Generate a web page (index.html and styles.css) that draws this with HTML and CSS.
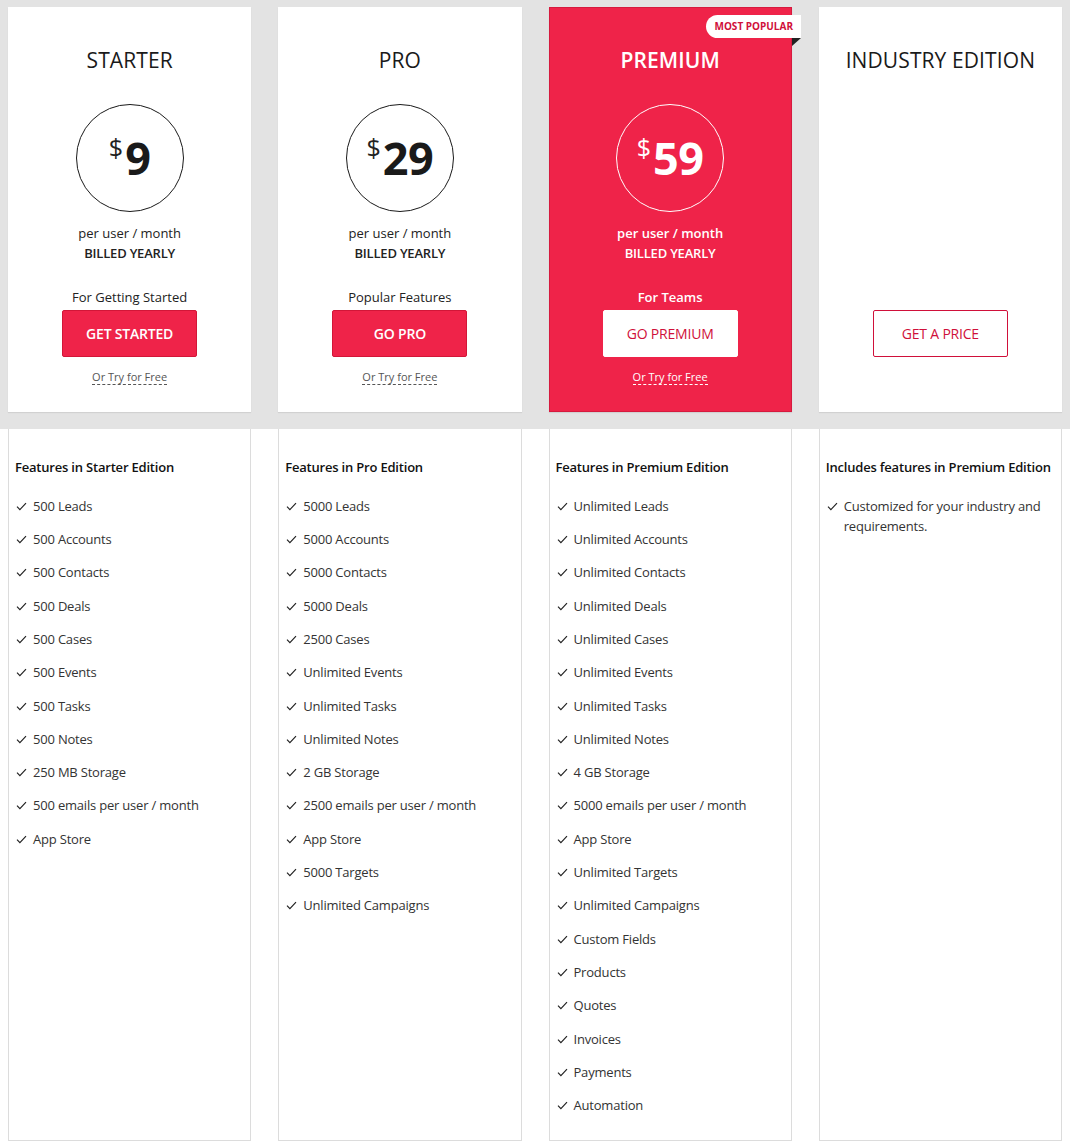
FILE: index.html
```html
<!DOCTYPE html>
<html lang="en">
<head>
<meta charset="utf-8">
<title>Pricing</title>
<link rel="stylesheet" href="styles.css">
</head>
<body>
<section class="plans">
  <div class="card">
    <h2 class="title">STARTER</h2>
    <div class="price-area">
      <div class="circle"><span class="cur">$</span><span class="amt">9</span></div>
      <div class="per">per user / month</div>
      <div class="billed">BILLED YEARLY</div>
    </div>
    <div class="tagline">For Getting Started</div>
    <a class="btn btn-red">GET STARTED</a>
    <a class="try">Or Try for Free</a>
  </div>
  <div class="card">
    <h2 class="title">PRO</h2>
    <div class="price-area">
      <div class="circle"><span class="cur">$</span><span class="amt">29</span></div>
      <div class="per">per user / month</div>
      <div class="billed">BILLED YEARLY</div>
    </div>
    <div class="tagline">Popular Features</div>
    <a class="btn btn-red">GO PRO</a>
    <a class="try">Or Try for Free</a>
  </div>
  <div class="card card-premium">
    <div class="badge">MOST POPULAR</div>
    <h2 class="title">PREMIUM</h2>
    <div class="price-area">
      <div class="circle"><span class="cur">$</span><span class="amt">59</span></div>
      <div class="per">per user / month</div>
      <div class="billed">BILLED YEARLY</div>
    </div>
    <div class="tagline">For Teams</div>
    <a class="btn btn-white">GO PREMIUM</a>
    <a class="try">Or Try for Free</a>
  </div>
  <div class="card">
    <h2 class="title">INDUSTRY EDITION</h2>
    <div class="price-area"></div>
    <div class="tagline"></div>
    <a class="btn btn-outline">GET A PRICE</a>
  </div>
</section>

<section class="features">
  <div class="col">
    <h3>Features in Starter Edition</h3>
    <ul>
      <li><svg class="chk" viewBox="0 0 12 10"><path d="M1 5.2 L4.2 8.4 L11 1.2"/></svg><span>500 Leads</span></li>
      <li><svg class="chk" viewBox="0 0 12 10"><path d="M1 5.2 L4.2 8.4 L11 1.2"/></svg><span>500 Accounts</span></li>
      <li><svg class="chk" viewBox="0 0 12 10"><path d="M1 5.2 L4.2 8.4 L11 1.2"/></svg><span>500 Contacts</span></li>
      <li><svg class="chk" viewBox="0 0 12 10"><path d="M1 5.2 L4.2 8.4 L11 1.2"/></svg><span>500 Deals</span></li>
      <li><svg class="chk" viewBox="0 0 12 10"><path d="M1 5.2 L4.2 8.4 L11 1.2"/></svg><span>500 Cases</span></li>
      <li><svg class="chk" viewBox="0 0 12 10"><path d="M1 5.2 L4.2 8.4 L11 1.2"/></svg><span>500 Events</span></li>
      <li><svg class="chk" viewBox="0 0 12 10"><path d="M1 5.2 L4.2 8.4 L11 1.2"/></svg><span>500 Tasks</span></li>
      <li><svg class="chk" viewBox="0 0 12 10"><path d="M1 5.2 L4.2 8.4 L11 1.2"/></svg><span>500 Notes</span></li>
      <li><svg class="chk" viewBox="0 0 12 10"><path d="M1 5.2 L4.2 8.4 L11 1.2"/></svg><span>250 MB Storage</span></li>
      <li><svg class="chk" viewBox="0 0 12 10"><path d="M1 5.2 L4.2 8.4 L11 1.2"/></svg><span>500 emails per user / month</span></li>
      <li><svg class="chk" viewBox="0 0 12 10"><path d="M1 5.2 L4.2 8.4 L11 1.2"/></svg><span>App Store</span></li>
    </ul>
  </div>
  <div class="col">
    <h3>Features in Pro Edition</h3>
    <ul>
      <li><svg class="chk" viewBox="0 0 12 10"><path d="M1 5.2 L4.2 8.4 L11 1.2"/></svg><span>5000 Leads</span></li>
      <li><svg class="chk" viewBox="0 0 12 10"><path d="M1 5.2 L4.2 8.4 L11 1.2"/></svg><span>5000 Accounts</span></li>
      <li><svg class="chk" viewBox="0 0 12 10"><path d="M1 5.2 L4.2 8.4 L11 1.2"/></svg><span>5000 Contacts</span></li>
      <li><svg class="chk" viewBox="0 0 12 10"><path d="M1 5.2 L4.2 8.4 L11 1.2"/></svg><span>5000 Deals</span></li>
      <li><svg class="chk" viewBox="0 0 12 10"><path d="M1 5.2 L4.2 8.4 L11 1.2"/></svg><span>2500 Cases</span></li>
      <li><svg class="chk" viewBox="0 0 12 10"><path d="M1 5.2 L4.2 8.4 L11 1.2"/></svg><span>Unlimited Events</span></li>
      <li><svg class="chk" viewBox="0 0 12 10"><path d="M1 5.2 L4.2 8.4 L11 1.2"/></svg><span>Unlimited Tasks</span></li>
      <li><svg class="chk" viewBox="0 0 12 10"><path d="M1 5.2 L4.2 8.4 L11 1.2"/></svg><span>Unlimited Notes</span></li>
      <li><svg class="chk" viewBox="0 0 12 10"><path d="M1 5.2 L4.2 8.4 L11 1.2"/></svg><span>2 GB Storage</span></li>
      <li><svg class="chk" viewBox="0 0 12 10"><path d="M1 5.2 L4.2 8.4 L11 1.2"/></svg><span>2500 emails per user / month</span></li>
      <li><svg class="chk" viewBox="0 0 12 10"><path d="M1 5.2 L4.2 8.4 L11 1.2"/></svg><span>App Store</span></li>
      <li><svg class="chk" viewBox="0 0 12 10"><path d="M1 5.2 L4.2 8.4 L11 1.2"/></svg><span>5000 Targets</span></li>
      <li><svg class="chk" viewBox="0 0 12 10"><path d="M1 5.2 L4.2 8.4 L11 1.2"/></svg><span>Unlimited Campaigns</span></li>
    </ul>
  </div>
  <div class="col">
    <h3>Features in Premium Edition</h3>
    <ul>
      <li><svg class="chk" viewBox="0 0 12 10"><path d="M1 5.2 L4.2 8.4 L11 1.2"/></svg><span>Unlimited Leads</span></li>
      <li><svg class="chk" viewBox="0 0 12 10"><path d="M1 5.2 L4.2 8.4 L11 1.2"/></svg><span>Unlimited Accounts</span></li>
      <li><svg class="chk" viewBox="0 0 12 10"><path d="M1 5.2 L4.2 8.4 L11 1.2"/></svg><span>Unlimited Contacts</span></li>
      <li><svg class="chk" viewBox="0 0 12 10"><path d="M1 5.2 L4.2 8.4 L11 1.2"/></svg><span>Unlimited Deals</span></li>
      <li><svg class="chk" viewBox="0 0 12 10"><path d="M1 5.2 L4.2 8.4 L11 1.2"/></svg><span>Unlimited Cases</span></li>
      <li><svg class="chk" viewBox="0 0 12 10"><path d="M1 5.2 L4.2 8.4 L11 1.2"/></svg><span>Unlimited Events</span></li>
      <li><svg class="chk" viewBox="0 0 12 10"><path d="M1 5.2 L4.2 8.4 L11 1.2"/></svg><span>Unlimited Tasks</span></li>
      <li><svg class="chk" viewBox="0 0 12 10"><path d="M1 5.2 L4.2 8.4 L11 1.2"/></svg><span>Unlimited Notes</span></li>
      <li><svg class="chk" viewBox="0 0 12 10"><path d="M1 5.2 L4.2 8.4 L11 1.2"/></svg><span>4 GB Storage</span></li>
      <li><svg class="chk" viewBox="0 0 12 10"><path d="M1 5.2 L4.2 8.4 L11 1.2"/></svg><span>5000 emails per user / month</span></li>
      <li><svg class="chk" viewBox="0 0 12 10"><path d="M1 5.2 L4.2 8.4 L11 1.2"/></svg><span>App Store</span></li>
      <li><svg class="chk" viewBox="0 0 12 10"><path d="M1 5.2 L4.2 8.4 L11 1.2"/></svg><span>Unlimited Targets</span></li>
      <li><svg class="chk" viewBox="0 0 12 10"><path d="M1 5.2 L4.2 8.4 L11 1.2"/></svg><span>Unlimited Campaigns</span></li>
      <li><svg class="chk" viewBox="0 0 12 10"><path d="M1 5.2 L4.2 8.4 L11 1.2"/></svg><span>Custom Fields</span></li>
      <li><svg class="chk" viewBox="0 0 12 10"><path d="M1 5.2 L4.2 8.4 L11 1.2"/></svg><span>Products</span></li>
      <li><svg class="chk" viewBox="0 0 12 10"><path d="M1 5.2 L4.2 8.4 L11 1.2"/></svg><span>Quotes</span></li>
      <li><svg class="chk" viewBox="0 0 12 10"><path d="M1 5.2 L4.2 8.4 L11 1.2"/></svg><span>Invoices</span></li>
      <li><svg class="chk" viewBox="0 0 12 10"><path d="M1 5.2 L4.2 8.4 L11 1.2"/></svg><span>Payments</span></li>
      <li><svg class="chk" viewBox="0 0 12 10"><path d="M1 5.2 L4.2 8.4 L11 1.2"/></svg><span>Automation</span></li>
    </ul>
  </div>
  <div class="col">
    <h3>Includes features in Premium Edition</h3>
    <ul>
      <li><svg class="chk" viewBox="0 0 12 10"><path d="M1 5.2 L4.2 8.4 L11 1.2"/></svg><span>Customized for your industry and requirements.</span></li>
    </ul>
  </div>
</section>
</body>
</html>
```

FILE: styles.css
```css
* { box-sizing: border-box; }

body {
  margin: 0;
  background: #ffffff;
  font-family: "Open Sans", "Noto Sans", "Liberation Sans", sans-serif;
  color: #222;
}

.plans {
  background: #e3e3e3;
  padding: 7px 8px 17px;
  display: grid;
  grid-template-columns: repeat(4, 1fr);
  column-gap: 27px;
}

.card {
  position: relative;
  background: #fff;
  height: 405px;
  display: flex;
  flex-direction: column;
  align-items: center;
  text-align: center;
  box-shadow: 0 1px 1px rgba(0, 0, 0, 0.08);
}

.card-premium {
  background: #ef2349;
  border: 1px solid #d61a3e;
  color: #fff;
}

.title {
  margin: 0;
  padding-top: 39px;
  font-size: 21px;
  line-height: 28px;
  font-weight: 500;
  color: #1a1a1a;
  letter-spacing: 0.1px;
}

.card-premium .title {
  color: #fff;
  font-weight: 600;
  padding-top: 38px;
}

.price-area {
  height: 189px;
  display: flex;
  flex-direction: column;
  align-items: center;
}

.circle {
  margin-top: 30px;
  width: 108px;
  height: 108px;
  border: 1.5px solid #1a1a1a;
  border-radius: 50%;
  display: flex;
  align-items: center;
  justify-content: center;
  padding-bottom: 2px;
}

.card-premium .circle { border-color: #fff; }

.cur {
  font-size: 25px;
  line-height: 1;
  font-weight: 400;
  align-self: center;
  margin-top: -20px;
  margin-right: 2px;
}

.amt {
  font-size: 45px;
  font-weight: 700;
  line-height: 1;
  color: #1a1a1a;
  letter-spacing: -0.5px;
}

.card-premium .amt { color: #fff; }

.per {
  margin-top: 11px;
  font-size: 13px;
  line-height: 20px;
}

.billed {
  font-size: 13px;
  line-height: 20px;
  font-weight: 600;
  letter-spacing: -0.2px;
}

.card-premium .per,
.card-premium .billed,
.card-premium .tagline { font-weight: 600; }

.tagline {
  margin-top: 24px;
  height: 20px;
  font-size: 13px;
  line-height: 20px;
}

.btn {
  margin-top: 3px;
  width: 135px;
  height: 47px;
  display: flex;
  align-items: center;
  justify-content: center;
  font-size: 14px;
  font-weight: 600;
  letter-spacing: -0.2px;
  border-radius: 2px;
  cursor: pointer;
}

.btn-red {
  background: #ef2349;
  border: 1px solid #d21638;
  color: #fff;
}

.btn-white {
  background: #fff;
  color: #d0103a;
  border: 1px solid #fff;
  font-weight: 500;
}

.btn-outline {
  background: #fff;
  color: #d0103a;
  border: 1.5px solid #d0103a;
  font-weight: 500;
}

.try {
  margin-top: 12px;
  font-size: 11px;
  line-height: 15px;
  color: #555;
  border-bottom: 1px dashed #555;
  cursor: pointer;
}

.card-premium .try {
  color: #fff;
  border-bottom-color: #fff;
}

.badge {
  position: absolute;
  top: 7px;
  right: -10px;
  width: 95px;
  height: 23px;
  background: #fff;
  color: #d0103a;
  font-size: 10px;
  font-weight: 700;
  line-height: 23px;
  text-align: center;
  border-radius: 12px 0 0 12px;
  padding-left: 1px;
}

.badge::after {
  content: "";
  position: absolute;
  right: 0;
  top: 23px;
  width: 0;
  height: 0;
  border-top: 8px solid #222;
  border-right: 9px solid transparent;
}

.features {
  padding: 0 8px;
  display: grid;
  grid-template-columns: repeat(4, 1fr);
  column-gap: 27px;
}

.col {
  border: 1px solid #dcdcdc;
  border-top: none;
  padding: 28px 4px 18px 6px;
}

.col h3 {
  margin: 0 0 12px;
  font-size: 13px;
  line-height: 20px;
  font-weight: 600;
  color: #111;
  letter-spacing: -0.2px;
  white-space: nowrap;
}

.col ul {
  list-style: none;
  margin: 0;
  padding: 0;
}

.col li {
  display: flex;
  padding: 6.67px 0;
  font-size: 13px;
  line-height: 20px;
  color: #333;
  letter-spacing: -0.2px;
}

.chk {
  flex: 0 0 auto;
  width: 11px;
  height: 9px;
  margin: 6px 6px 0 1px;
  fill: none;
  stroke: #222;
  stroke-width: 1.3;
}
```
